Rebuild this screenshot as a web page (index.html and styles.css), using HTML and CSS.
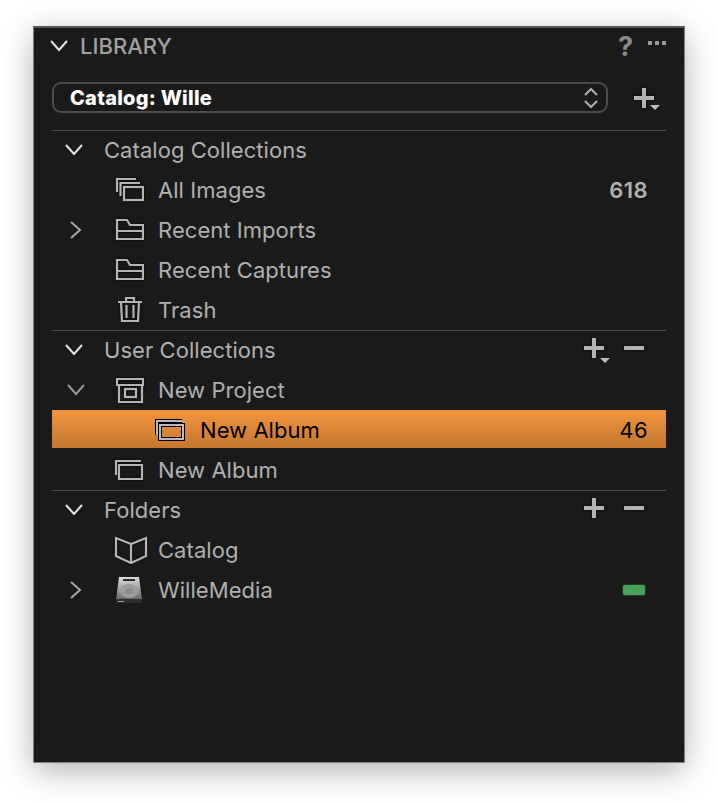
FILE: index.html
```html
<!DOCTYPE html>
<html lang="en">
<head>
<meta charset="utf-8">
<title>Library</title>
<link rel="stylesheet" href="styles.css">
</head>
<body>
<svg class="defs" width="0" height="0" aria-hidden="true">
  <symbol id="down" viewBox="0 0 20 14"><path d="M2 2l8 9 8-9"/></symbol>
  <symbol id="right" viewBox="0 0 14 20"><path d="M2 2l9 8-9 8"/></symbol>
  <symbol id="stack" viewBox="0 0 30 26"><path d="M22 2H3v13M26 6H6.500v13"/><rect x="10" y="10" width="19" height="13"/></symbol>
  <symbol id="folder" viewBox="0 0 30 24"><path d="M3 21V2h10l3 5h13v14zM3 13h26"/></symbol>
  <symbol id="trash" viewBox="0 0 26 28"><path d="M1 6h24M9 6V2h8v4M4 6l1 19h16l1-19M9.500 9v13M16.500 9v13"/></symbol>
  <symbol id="box" viewBox="0 0 30 26"><path d="M3 2h26v6H3zM5 8v17h23V8"/><rect x="11" y="12" width="11" height="8"/></symbol>
  <symbol id="album" viewBox="0 0 32 24"><path d="M27 3H2v14M5 21V7h23v14z"/></symbol>
  <symbol id="book" viewBox="0 0 34 28"><path d="M17 8L2 2v18l15 7 15-7V2zM17 8v19"/></symbol>
  <symbol id="plus" viewBox="0 0 22 22"><path d="M11 1v20M1 11h20"/></symbol>
  <symbol id="minus" viewBox="0 0 22 6"><path d="M1 3h20"/></symbol>
</svg>

<main class="panel">
  <header class="head">
    <svg class="chev chev-white head-chev" width="20" height="14"><use href="#down"/></svg>
    <h1 class="title">LIBRARY</h1>
    <span class="help">?</span>
    <span class="dots"><i></i><i></i><i></i></span>
  </header>

  <div class="picker-row">
    <div class="picker">
      <span class="picker-text">Catalog: Wille</span>
      <svg class="updown" width="16" height="24" viewBox="0 0 16 24"><path d="M2 9l6-6 6 6M2 15l6 6 6-6"/></svg>
    </div>
    <span class="plus-drop plus-main">
      <svg class="glyph" width="22" height="22"><use href="#plus"/></svg>
      <i class="tri"></i>
    </span>
  </div>

  <section class="section">
    <div class="row">
      <span class="slot-chev"><svg class="chev chev-white" width="20" height="14"><use href="#down"/></svg></span>
      <span class="label">Catalog Collections</span>
    </div>
    <div class="row">
      <span class="slot-chev"></span>
      <span class="slot-icon"><svg class="ic" width="30" height="26"><use href="#stack"/></svg></span>
      <span class="label">All Images</span>
      <span class="count">618</span>
    </div>
    <div class="row">
      <span class="slot-chev"><svg class="chev chev-side" width="14" height="20"><use href="#right"/></svg></span>
      <span class="slot-icon"><svg class="ic" width="30" height="24"><use href="#folder"/></svg></span>
      <span class="label">Recent Imports</span>
    </div>
    <div class="row">
      <span class="slot-chev"></span>
      <span class="slot-icon"><svg class="ic" width="30" height="24"><use href="#folder"/></svg></span>
      <span class="label">Recent Captures</span>
    </div>
    <div class="row">
      <span class="slot-chev"></span>
      <span class="slot-icon"><svg class="ic ic-trash" width="26" height="28"><use href="#trash"/></svg></span>
      <span class="label">Trash</span>
    </div>
  </section>

  <section class="section">
    <div class="row">
      <span class="slot-chev"><svg class="chev chev-white" width="20" height="14"><use href="#down"/></svg></span>
      <span class="label">User Collections</span>
      <span class="actions">
        <span class="plus-drop">
          <svg class="glyph" width="22" height="22"><use href="#plus"/></svg>
          <i class="tri tri-low"></i>
        </span>
        <svg class="glyph" width="22" height="6"><use href="#minus"/></svg>
      </span>
    </div>
    <div class="row">
      <span class="slot-chev"><svg class="chev chev-grey" width="20" height="14"><use href="#down"/></svg></span>
      <span class="slot-icon"><svg class="ic" width="30" height="26"><use href="#box"/></svg></span>
      <span class="label">New Project</span>
    </div>
    <div class="row row-selected">
      <span class="slot-deep">
        <svg class="ic-selected" width="32" height="24">
          <use class="under" href="#album"/>
          <use class="over" href="#album"/>
        </svg>
      </span>
      <span class="label">New Album</span>
      <span class="count">46</span>
    </div>
    <div class="row">
      <span class="slot-chev"></span>
      <span class="slot-icon"><svg class="ic" width="32" height="24"><use href="#album"/></svg></span>
      <span class="label">New Album</span>
    </div>
  </section>

  <section class="section">
    <div class="row">
      <span class="slot-chev"><svg class="chev chev-white" width="20" height="14"><use href="#down"/></svg></span>
      <span class="label">Folders</span>
      <span class="actions">
        <svg class="glyph" width="22" height="22"><use href="#plus"/></svg>
        <svg class="glyph" width="22" height="6"><use href="#minus"/></svg>
      </span>
    </div>
    <div class="row">
      <span class="slot-chev"></span>
      <span class="slot-icon"><svg class="ic" width="34" height="28"><use href="#book"/></svg></span>
      <span class="label">Catalog</span>
    </div>
    <div class="row">
      <span class="slot-chev"><svg class="chev chev-side" width="14" height="20"><use href="#right"/></svg></span>
      <span class="slot-icon">
        <svg class="hdd" width="30" height="28" viewBox="0 0 30 28">
          <defs>
            <linearGradient id="hddBody" x1="0" y1="0" x2="0" y2="1">
              <stop offset="0" stop-color="#dcdcdc"/>
              <stop offset="0.5" stop-color="#a4a4a4"/>
              <stop offset="1" stop-color="#626262"/>
            </linearGradient>
          </defs>
          <path d="M5 1h20l3 23H2z" fill="url(#hddBody)"/>
          <rect x="2" y="23" width="26" height="4" rx="1" fill="#2e2e2e"/>
          <rect x="9" y="3" width="12" height="2" fill="#2a2a2a"/>
          <ellipse cx="15" cy="15" rx="9" ry="7" fill="#9c9c9c"/>
          <ellipse cx="15" cy="15" rx="4" ry="3" fill="#8a8a8a"/>
          <rect x="4" y="25" width="6" height="1" fill="#999"/>
        </svg>
      </span>
      <span class="label">WilleMedia</span>
      <span class="status"></span>
    </div>
  </section>
</main>
</body>
</html>
```

FILE: styles.css
```css
* { box-sizing: border-box; }

html, body { margin: 0; background: #fff; }

body {
  width: 718px;
  height: 804px;
  padding: 26px 33px 0;
  overflow: hidden;
  font-family: Inter, "Liberation Sans", sans-serif;
}

.defs { display: block; height: 0; }

.panel {
  width: 652px;
  height: 737px;
  padding: 0 18px;
  background: #1a1a1a;
  border: 1px solid #808080;
  border-top: 2px solid #555;
  box-shadow: 0 8px 30px rgba(0, 0, 0, .3);
}

.head {
  display: flex;
  align-items: center;
  height: 36px;
}

.head-chev { margin-left: -3px; }

.title {
  flex: 1;
  margin: 0 0 0 11px;
  color: #a0a0a0;
  font-size: 22px;
  font-weight: 500;
}

.help {
  margin-right: 15px;
  color: #8a8a8a;
  font-size: 27px;
  font-weight: 700;
  line-height: 1;
}

.dots { display: flex; gap: 3px; margin-bottom: 6px; }
.dots i { width: 4px; height: 4px; background: #9a9a9a; }

.picker-row {
  display: flex;
  align-items: center;
  height: 31px;
  margin: 18px 0 17px;
}

.picker {
  display: flex;
  align-items: center;
  justify-content: space-between;
  width: 556px;
  height: 31px;
  padding: 0 7px 0 16px;
  border: 2px solid #4c4c4c;
  border-radius: 9px;
}

.picker-text {
  color: #fff;
  font-size: 20px;
  font-weight: 800;
  letter-spacing: .25px;
}

.updown { fill: none; stroke: #b0b0b0; stroke-width: 2; }

.plus-drop {
  position: relative;
  display: block;
  width: 22px;
  height: 22px;
}

.plus-main { margin: 1px 0 0 25px; }

.tri {
  position: absolute;
  right: -5px;
  bottom: -1px;
  border: 5px solid transparent;
  border-top: 5px solid #bdbdbd;
  border-bottom: 0;
}

.tri-low { bottom: -4px; }

.glyph {
  display: block;
  fill: none;
  stroke: #b4b4b4;
  stroke-width: 4;
  filter: drop-shadow(0 0 .8px #000);
}

.section { box-shadow: inset 0 1px #4a4a4a; }

.row {
  display: flex;
  align-items: center;
  height: 40px;
  padding-right: 18px;
  color: #b0b0b0;
  font-size: 22px;
  letter-spacing: .05px;
}

.row-selected {
  height: 38px;
  margin-bottom: 2px;
  padding-top: 1px;
  color: #000;
  background: linear-gradient(#f2953f, #c47830);
}

.slot-chev {
  display: flex;
  align-items: center;
  flex: none;
  width: 52px;
  padding-left: 12px;
}

.slot-icon {
  display: flex;
  align-items: center;
  flex: none;
  width: 54px;
  padding-left: 10px;
}

.slot-deep {
  display: flex;
  align-items: center;
  flex: none;
  width: 148px;
  padding-left: 103px;
}

.label { flex: 1; white-space: nowrap; }

.count { font-weight: 600; letter-spacing: .4px; }
.row-selected .count { font-weight: 400; }

.chev {
  display: block;
  flex: none;
  fill: none;
  stroke-width: 2;
}

.chev-white { stroke: #e6e6e6; }
.chev-grey { stroke: #9a9a9a; margin-left: 2px; }
.chev-side { stroke: #a8a8a8; margin-left: 5px; }

.ic {
  display: block;
  flex: none;
  fill: none;
  stroke: #b4b4b4;
  stroke-width: 2.200;
  filter: drop-shadow(0 0 .8px #000);
}

.ic-trash { margin-left: 3px; }

.ic-selected {
  display: block;
  flex: none;
  margin-top: 1px;
  fill: none;
}

.ic-selected .under { stroke: #000; stroke-width: 4; }
.ic-selected .over { stroke: #b8b8b8; stroke-width: 2; }

.actions {
  display: flex;
  align-items: center;
  gap: 18px;
  margin: 0 3px 4px 0;
}

.status {
  width: 22px;
  height: 10px;
  margin-right: 3px;
  border-radius: 2px;
  background: #46a358;
  box-shadow: 0 0 2px #3c8f4c;
}

.hdd { display: block; flex: none; }
```
